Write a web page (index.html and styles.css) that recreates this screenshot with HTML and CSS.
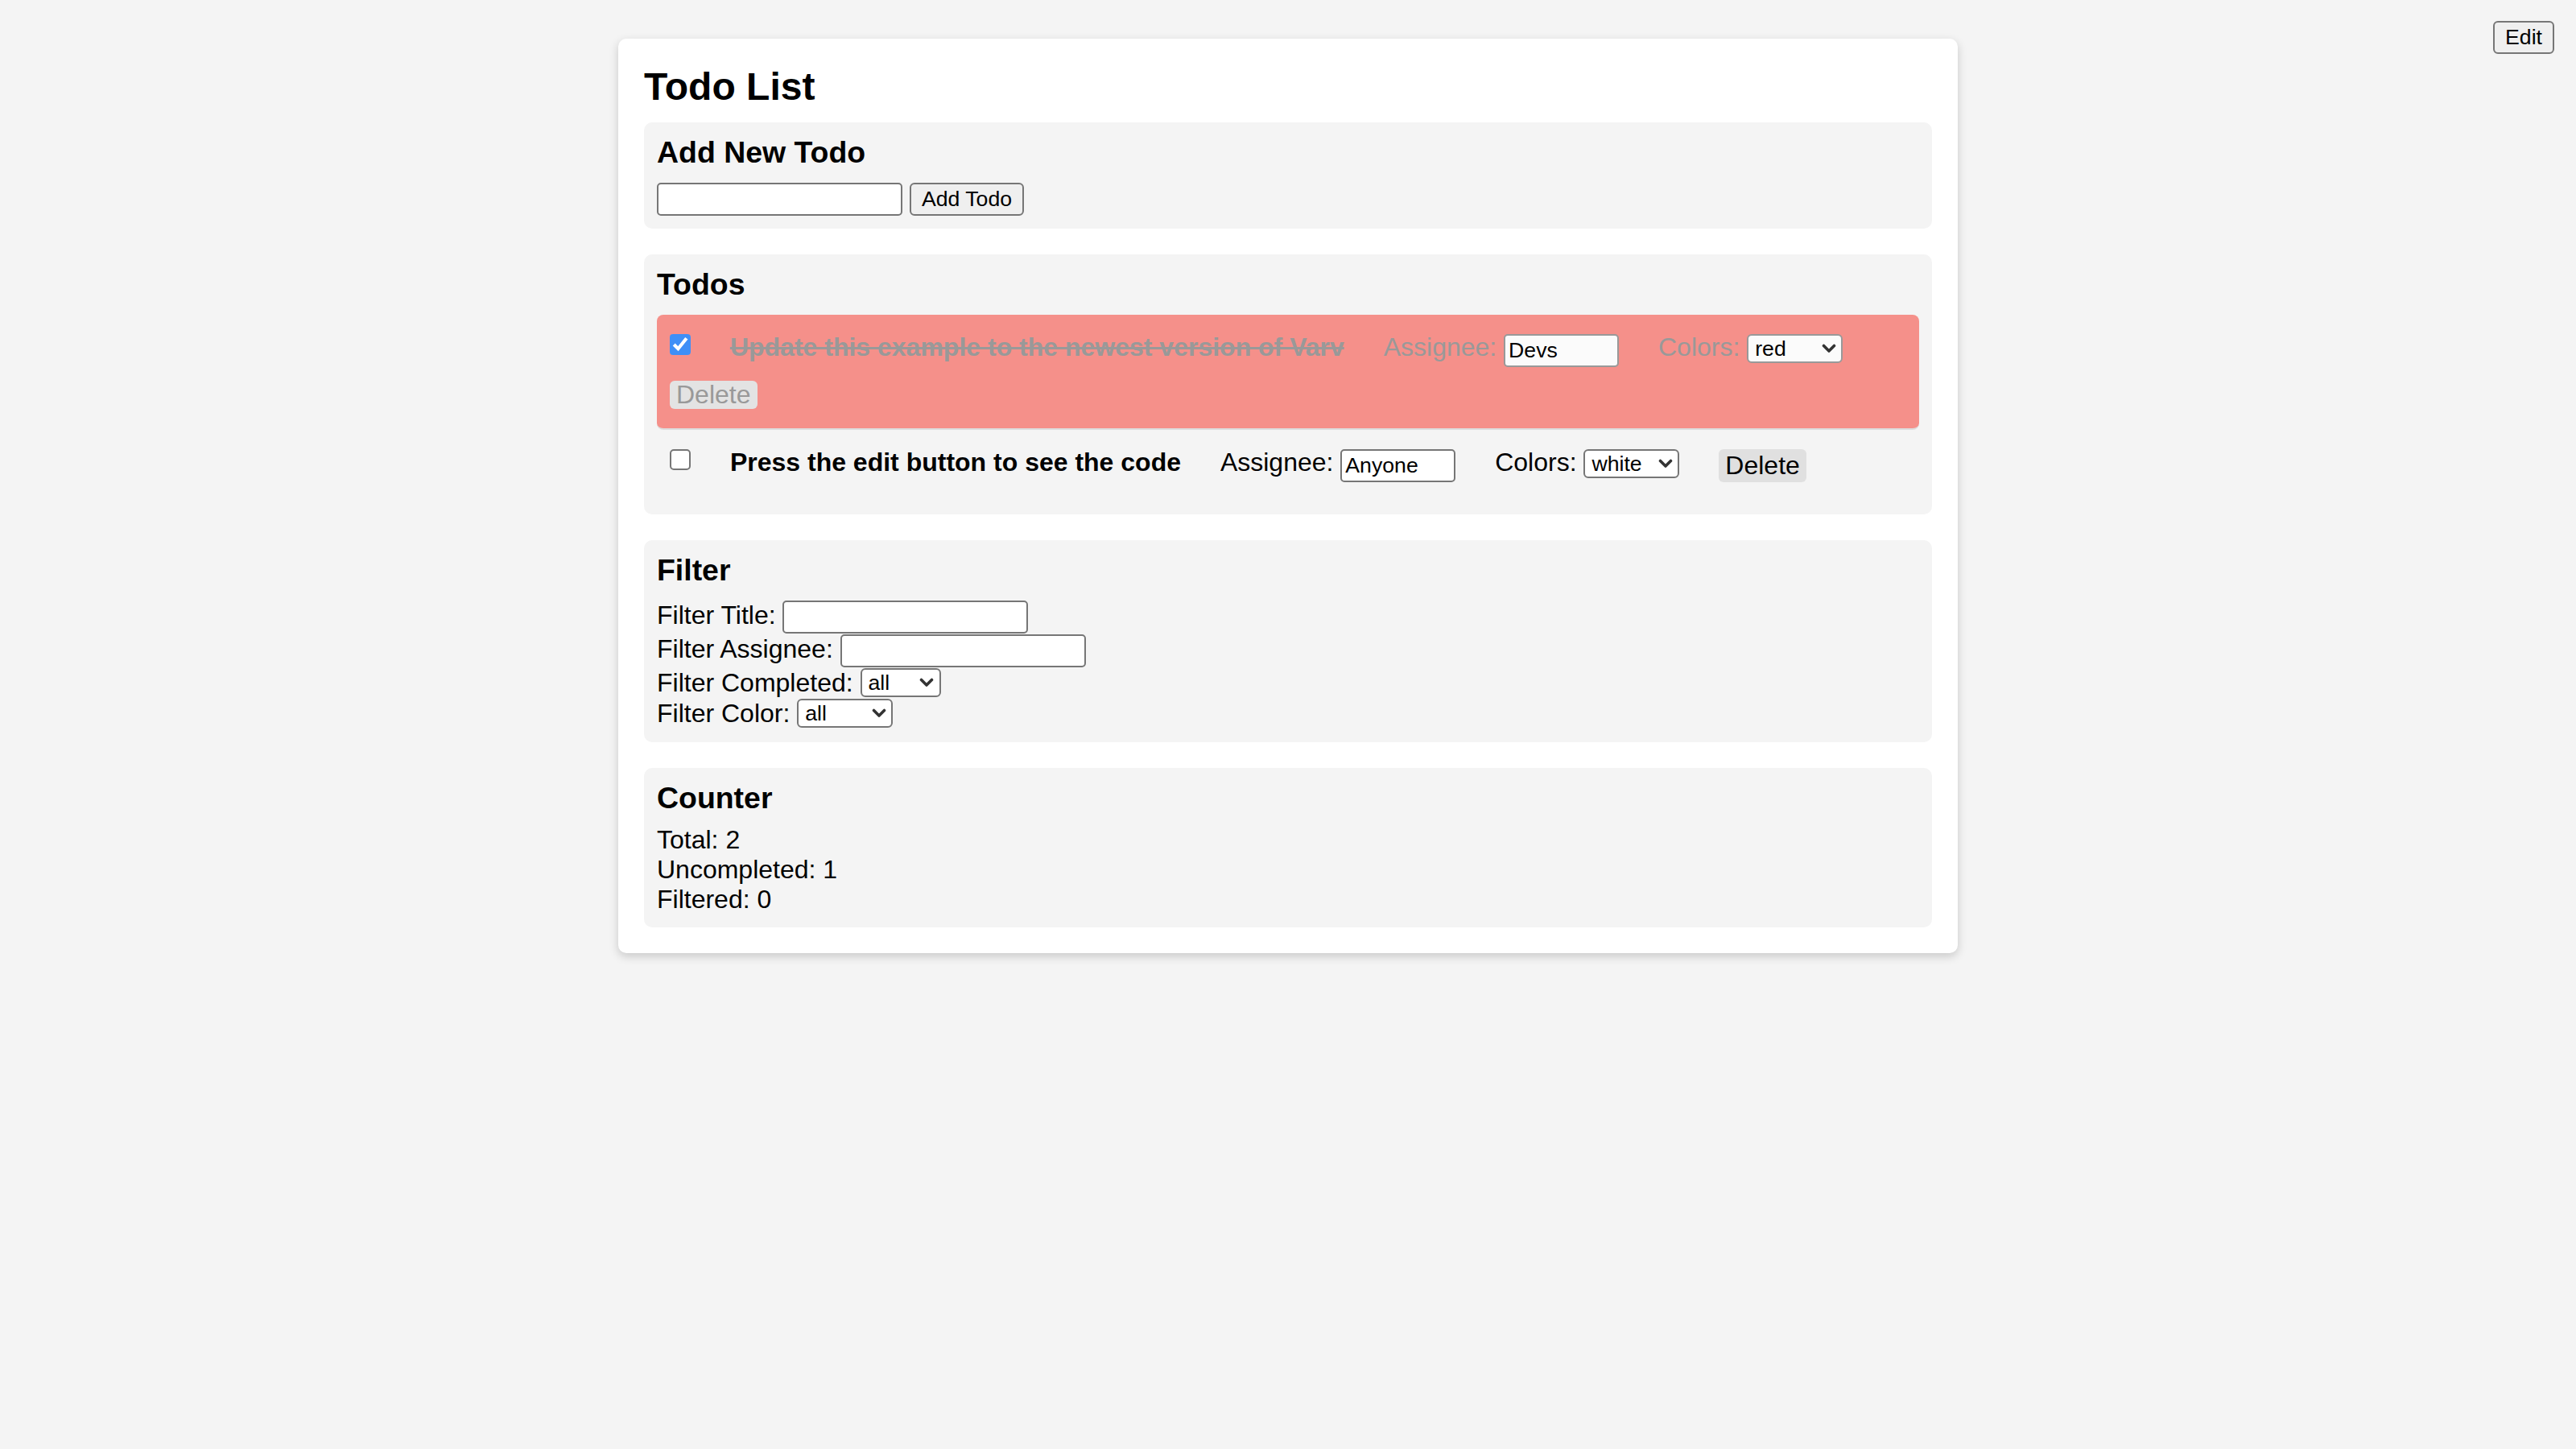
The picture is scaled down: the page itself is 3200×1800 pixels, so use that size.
FILE: index.html
```html
<!DOCTYPE html>
<html lang="en">
<head>
<meta charset="utf-8">
<title>Todo List</title>
<link rel="stylesheet" href="styles.css">
</head>
<body>
<button class="std-btn edit-btn" type="button">Edit</button>
<div class="app">
  <h1 class="app-title">Todo List</h1>
  <div class="panels">
    <section class="panel">
      <h3 class="panel-title">Add New Todo</h3>
      <div class="add-form">
        <input class="text-input" type="text">
        <button class="std-btn" type="button">Add Todo</button>
      </div>
    </section>

    <section class="panel">
      <h3 class="panel-title">Todos</h3>
      <div class="todo-list">
        <div class="todo todo-done">
          <input class="todo-check" type="checkbox" checked>
          <span class="todo-title">Update this example to the newest version of Varv</span>
          <label class="field"><span>Assignee:</span><input class="text-input short" type="text" value="Devs"></label>
          <label class="field"><span>Colors:</span><span class="select-wrap"><select class="pick pick-color"><option selected>red</option><option>white</option><option>green</option><option>blue</option><option>yellow</option></select><svg class="chev" viewBox="0 0 10 7" aria-hidden="true"><polyline points="1.4,1.4 5,5 8.6,1.4"/></svg></span></label>
          <button class="delete-btn" type="button">Delete</button>
        </div>
        <div class="todo">
          <input class="todo-check" type="checkbox">
          <span class="todo-title">Press the edit button to see the code</span>
          <label class="field"><span>Assignee:</span><input class="text-input short" type="text" value="Anyone"></label>
          <label class="field"><span>Colors:</span><span class="select-wrap"><select class="pick pick-color"><option>red</option><option selected>white</option><option>green</option><option>blue</option><option>yellow</option></select><svg class="chev" viewBox="0 0 10 7" aria-hidden="true"><polyline points="1.4,1.4 5,5 8.6,1.4"/></svg></span></label>
          <button class="delete-btn" type="button">Delete</button>
        </div>
      </div>
    </section>

    <section class="panel">
      <h3 class="panel-title">Filter</h3>
      <div class="filter-row"><span>Filter Title:</span><input class="text-input" type="text"></div>
      <div class="filter-row"><span>Filter Assignee:</span><input class="text-input" type="text"></div>
      <div class="filter-row select-row"><span>Filter Completed:</span><span class="select-wrap"><select class="pick pick-done"><option>all</option><option>true</option><option>false</option></select><svg class="chev" viewBox="0 0 10 7" aria-hidden="true"><polyline points="1.4,1.4 5,5 8.6,1.4"/></svg></span></div>
      <div class="filter-row select-row"><span>Filter Color:</span><span class="select-wrap"><select class="pick pick-color"><option>all</option><option>red</option><option>white</option><option>green</option><option>blue</option><option>yellow</option></select><svg class="chev" viewBox="0 0 10 7" aria-hidden="true"><polyline points="1.4,1.4 5,5 8.6,1.4"/></svg></span></div>
    </section>

    <section class="panel">
      <h3 class="panel-title counter-title">Counter</h3>
      <div class="counter-line">Total: 2</div>
      <div class="counter-line">Uncompleted: 1</div>
      <div class="counter-line">Filtered: 0</div>
    </section>
  </div>
</div>
</body>
</html>
```
FILE: styles.css
```css
html {
  zoom: 2;
}

body {
  margin: 0;
  background: #f4f4f4;
  font-family: "Liberation Sans", Arial, Helvetica, sans-serif;
  font-size: 16px;
  color: #000;
}

.std-btn {
  box-sizing: border-box;
  height: 20.5px;
  padding: 0 6.5px;
  border: 1px solid #767676;
  border-radius: 3px;
  background: #efefef;
  color: #000;
  font-family: "Liberation Sans", Arial, sans-serif;
  font-size: 13.333px;
  line-height: normal;
}

.edit-btn {
  position: fixed;
  top: 13px;
  right: 13.5px;
}

.app {
  width: 800px;
  margin: 24px auto;
  padding: 16px;
  background: #fff;
  border-radius: 5px;
  box-shadow: 0 2px 6px rgba(0, 0, 0, 0.18);
}

.app-title {
  margin: 0 0 8.5px;
  font-size: 24px;
  line-height: normal;
}

.panels {
  display: flex;
  flex-direction: column;
  gap: 16px;
}

.panel {
  padding: 8px;
  background: #f4f4f4;
  border-radius: 5px;
}

.panel-title {
  margin: 0 0 8px;
  font-size: 18.72px;
  line-height: normal;
}

.counter-title {
  margin-bottom: 6px;
}

.add-form {
  display: flex;
  align-items: flex-start;
  gap: 4.45px;
}

.text-input {
  box-sizing: border-box;
  width: 152.5px;
  height: 20.5px;
  margin: 0;
  padding: 1px 2px;
  border: 1px solid #767676;
  border-radius: 2.5px;
  background: #fff;
  color: #000;
  font-family: "Liberation Sans", Arial, sans-serif;
  font-size: 13.333px;
}

.text-input.short {
  width: 71.5px;
}

.todo {
  display: flex;
  flex-wrap: wrap;
  align-items: flex-start;
  column-gap: 24.45px;
  row-gap: 8.5px;
  padding: 12px 8px;
  border-bottom: 1px solid #ddd;
  border-radius: 4px;
  line-height: 16px;
}

.todo:last-child {
  border-bottom: none;
}

.todo-done {
  background: #f5908a;
  color: #999;
}

.todo-done .text-input,
.todo-done .pick {
  border-color: #999;
  background-color: #fbfbfb;
}

.todo-check {
  width: 13px;
  height: 13px;
  margin: 0;
  accent-color: #3f8ff7;
}

.todo-title {
  font-weight: bold;
}

.todo-done .todo-title {
  text-decoration: line-through;
}

.field {
  display: flex;
  align-items: flex-start;
  gap: 4.45px;
}

.select-wrap {
  position: relative;
  display: inline-flex;
}

.pick {
  box-sizing: border-box;
  height: 18px;
  margin: 0;
  padding: 0 14px 0 4px;
  border: 1px solid #767676;
  border-radius: 3px;
  background-color: #fff;
  color: #000;
  font-family: "Liberation Sans", Arial, sans-serif;
  font-size: 13.333px;
  line-height: 16px;
  appearance: none;
  -webkit-appearance: none;
}

.pick-color {
  width: 59.5px;
}

.pick-done {
  width: 50px;
}

.chev {
  position: absolute;
  top: 6px;
  right: 4.3px;
  width: 9px;
  height: 6.3px;
  pointer-events: none;
}

.chev polyline {
  fill: none;
  stroke: #333;
  stroke-width: 2;
  stroke-linecap: round;
  stroke-linejoin: round;
}

.delete-btn {
  padding: 1px 4px;
  border: none;
  border-radius: 3px;
  background: #e0e0e0;
  color: inherit;
  font-family: "Liberation Sans", Arial, sans-serif;
  font-size: 16px;
  line-height: 18.5px;
}

.todo-done .delete-btn {
  padding: 0 4px;
  line-height: 17.6px;
  background: #e3e3e3;
}

.filter-row {
  display: flex;
  align-items: flex-start;
  gap: 4.45px;
  height: 21px;
}

.filter-row.select-row {
  height: 19px;
}

.counter-line {
  line-height: normal;
}
```
